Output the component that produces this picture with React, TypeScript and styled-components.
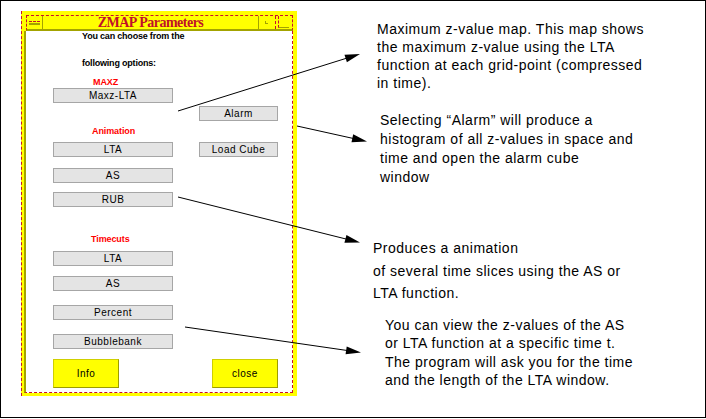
import React from "react";
import styled, { createGlobalStyle } from "styled-components";

const Global = createGlobalStyle`
  html, body { margin: 0; padding: 0; background: #fff; }
  body { font-family: "Liberation Sans", Arial, sans-serif; }
`;

const OLIVE = "#a3a300";
const DASH_RED = "#c8102e";

const Page = styled.div`
  position: relative;
  width: 706px;
  height: 418px;
  box-sizing: border-box;
  border: 1px solid #000;
  display: flex;
  align-items: flex-start;
  overflow: hidden;
  background: #fff;
`;

const Window = styled.div`
  margin: 10px 0 0 20px;
  width: 276px;
  height: 385px;
  box-sizing: border-box;
  flex-shrink: 0;
  background: #ffff00;
  border-left: 1px dashed ${DASH_RED};
  padding: 4px 4px 3px 2px;
  display: flex;
  flex-direction: column;
`;

const TitleBar = styled.div`
  margin-left: 2px;
  height: 16px;
  box-sizing: border-box;
  border-top: 1px dashed ${DASH_RED};
  border-left: 1px dashed ${DASH_RED};
  border-right: 1px dashed ${DASH_RED};
  border-bottom: 2px solid ${OLIVE};
  display: flex;
  align-items: stretch;
`;

const MenuBtn = styled.div`
  width: 16px;
  box-sizing: border-box;
  border-right: 1px solid ${OLIVE};
  display: flex;
  align-items: center;
  justify-content: center;
`;

const MenuGlyph = styled.span`
  width: 11px;
  height: 1px;
  border-top: 1px dashed ${DASH_RED};
  border-bottom: 2px solid ${OLIVE};
`;

const TitleText = styled.div`
  flex: 1;
  text-align: center;
  font: bold 14px/13px "Liberation Serif", "Times New Roman", serif;
  letter-spacing: -0.5px;
  color: #c0102a;
  white-space: nowrap;
`;

const MaxBtn = styled.div`
  width: 18px;
  box-sizing: border-box;
  border-left: 1px solid ${OLIVE};
  border-right: 1px dashed ${DASH_RED};
  display: flex;
  align-items: center;
  justify-content: center;
`;

const MaxGlyph = styled.span`
  width: 2px;
  height: 2px;
  border-left: 1px solid ${OLIVE};
  border-bottom: 1px solid ${OLIVE};
  margin-left: -2px;
`;

const MinBtn = styled.div`
  width: 16px;
  display: flex;
  align-items: flex-end;
  padding-bottom: 1px;
  box-sizing: border-box;
`;

const MinGlyph = styled.span`
  margin-left: 2px;
  width: 10px;
  height: 11px;
  border-left: 1px dashed ${DASH_RED};
  border-bottom: 1px solid ${OLIVE};
`;

const Body = styled.div`
  flex: 1;
  background: #fff;
  border-left: 2px solid ${OLIVE};
  border-right: 1px dashed ${DASH_RED};
  border-bottom: 1px dashed ${DASH_RED};
  padding-left: 27px;
  display: flex;
  flex-direction: column;
  align-items: flex-start;
`;

const Intro = styled.div<{ $mt: number }>`
  margin: ${(p) => p.$mt}px 0 0 29px;
  font: bold 9px/10px "Liberation Sans", Arial, sans-serif;
  letter-spacing: -0.2px;
  color: #000;
  white-space: nowrap;
`;

const Label = styled.div<{ $mt: number; $ml: number }>`
  margin: ${(p) => p.$mt}px 0 0 ${(p) => p.$ml}px;
  font: bold 9px/10px "Liberation Sans", Arial, sans-serif;
  letter-spacing: -0.1px;
  color: #ff0000;
  white-space: nowrap;
`;

const Row = styled.div<{ $mt: number; $gap?: number; $ml?: number }>`
  display: flex;
  margin-top: ${(p) => p.$mt}px;
  margin-left: ${(p) => p.$ml ?? 0}px;
  gap: ${(p) => p.$gap ?? 26}px;
`;

const Button = styled.button<{ $w: number }>`
  width: ${(p) => p.$w}px;
  height: 15px;
  box-sizing: border-box;
  padding: 0;
  margin: 0;
  background: #e4e4e4;
  border: 1px solid #a6a6a6;
  border-radius: 0;
  font: 10px/13px "Liberation Sans", Arial, sans-serif;
  letter-spacing: 0.5px;
  color: #000;
  white-space: nowrap;
`;

const YellowButton = styled(Button)`
  height: 29px;
  background: #ffff00;
  border-color: #cfcf00 #9c9c00 #9c9c00 #cfcf00;
`;

const Notes = styled.div`
  display: flex;
  flex-direction: column;
  align-items: flex-start;
`;

const Note = styled.p<{ $mt: number; $ml: number; $lh: number }>`
  margin: ${(p) => p.$mt}px 0 0 ${(p) => p.$ml}px;
  font-family: "Liberation Sans", Arial, sans-serif;
  font-size: 14px;
  line-height: ${(p) => p.$lh}px;
  letter-spacing: 0.5px;
  color: #000;
  white-space: nowrap;
`;

const Overlay = styled.svg`
  position: absolute;
  left: -1px;
  top: -1px;
  pointer-events: none;
  overflow: visible;
`;

type ArrowProps = { x1: number; y1: number; x2: number; y2: number };

function Arrow({ x1, y1, x2, y2 }: ArrowProps) {
  const dx = x2 - x1;
  const dy = y2 - y1;
  const L = Math.hypot(dx, dy);
  const ux = dx / L;
  const uy = dy / L;
  const len = 15;
  const hw = 4;
  const bx = x2 - ux * len;
  const by = y2 - uy * len;
  const pts = `${x2},${y2} ${bx - uy * hw},${by + ux * hw} ${bx + uy * hw},${by - ux * hw}`;
  return (
    <g>
      <line x1={x1} y1={y1} x2={bx + ux * 2} y2={by + uy * 2} stroke="#000" strokeWidth={1} />
      <polygon points={pts} fill="#000" />
    </g>
  );
}

export default function App() {
  return (
    <>
      <Global />
      <Page>
        <Window>
          <TitleBar>
            <MenuBtn>
              <MenuGlyph />
            </MenuBtn>
            <TitleText>ZMAP Parameters</TitleText>
            <MaxBtn>
              <MaxGlyph />
            </MaxBtn>
            <MinBtn>
              <MinGlyph />
            </MinBtn>
          </TitleBar>
          <Body>
            <Intro $mt={0}>You can choose from the</Intro>
            <Intro $mt={17}>following options:</Intro>
            <Label $mt={9} $ml={40}>MAXZ</Label>
            <Row $mt={1}>
              <Button $w={120}>Maxz-LTA</Button>
            </Row>
            <Row $mt={3} $ml={146}>
              <Button $w={79}>Alarm</Button>
            </Row>
            <Label $mt={5} $ml={39}>Animation</Label>
            <Row $mt={6}>
              <Button $w={120}>LTA</Button>
              <Button $w={79}>Load Cube</Button>
            </Row>
            <Row $mt={11}>
              <Button $w={120}>AS</Button>
            </Row>
            <Row $mt={9}>
              <Button $w={120}>RUB</Button>
            </Row>
            <Label $mt={27} $ml={38}>Timecuts</Label>
            <Row $mt={7}>
              <Button $w={120}>LTA</Button>
            </Row>
            <Row $mt={10}>
              <Button $w={120}>AS</Button>
            </Row>
            <Row $mt={14}>
              <Button $w={120}>Percent</Button>
            </Row>
            <Row $mt={14}>
              <Button $w={120}>Bubblebank</Button>
            </Row>
            <Row $mt={10} $gap={93}>
              <YellowButton $w={66}>Info</YellowButton>
              <YellowButton $w={66}>close</YellowButton>
            </Row>
          </Body>
        </Window>
        <Notes>
          <Note $mt={19} $ml={80} $lh={18}>
            Maximum z-value map. This map shows
            <br />
            the maximum z-value using the LTA
            <br />
            function at each grid-point (compressed
            <br />
            in time).
          </Note>
          <Note $mt={19} $ml={83} $lh={19}>
            Selecting “Alarm” will produce a
            <br />
            histogram of all z-values in space and
            <br />
            time and open the alarm cube
            <br />
            window
          </Note>
          <Note $mt={50} $ml={76} $lh={22.5}>
            Produces a animation
            <br />
            of several time slices using the AS or
            <br />
            LTA function.
          </Note>
          <Note $mt={11.5} $ml={88} $lh={18.3}>
            You can view the z-values of the AS
            <br />
            or LTA function at a specific time t.
            <br />
            The program will ask you for the time
            <br />
            and the length of the LTA window.
          </Note>
        </Notes>
        <Overlay width={706} height={418} viewBox="0 0 706 418">
          <Arrow x1={178} y1={111} x2={360} y2={54} />
          <Arrow x1={297} y1={126} x2={367} y2={141.5} />
          <Arrow x1={178} y1={197} x2={360} y2={242.5} />
          <Arrow x1={185} y1={327} x2={361} y2={352.5} />
        </Overlay>
      </Page>
    </>
  );
}
